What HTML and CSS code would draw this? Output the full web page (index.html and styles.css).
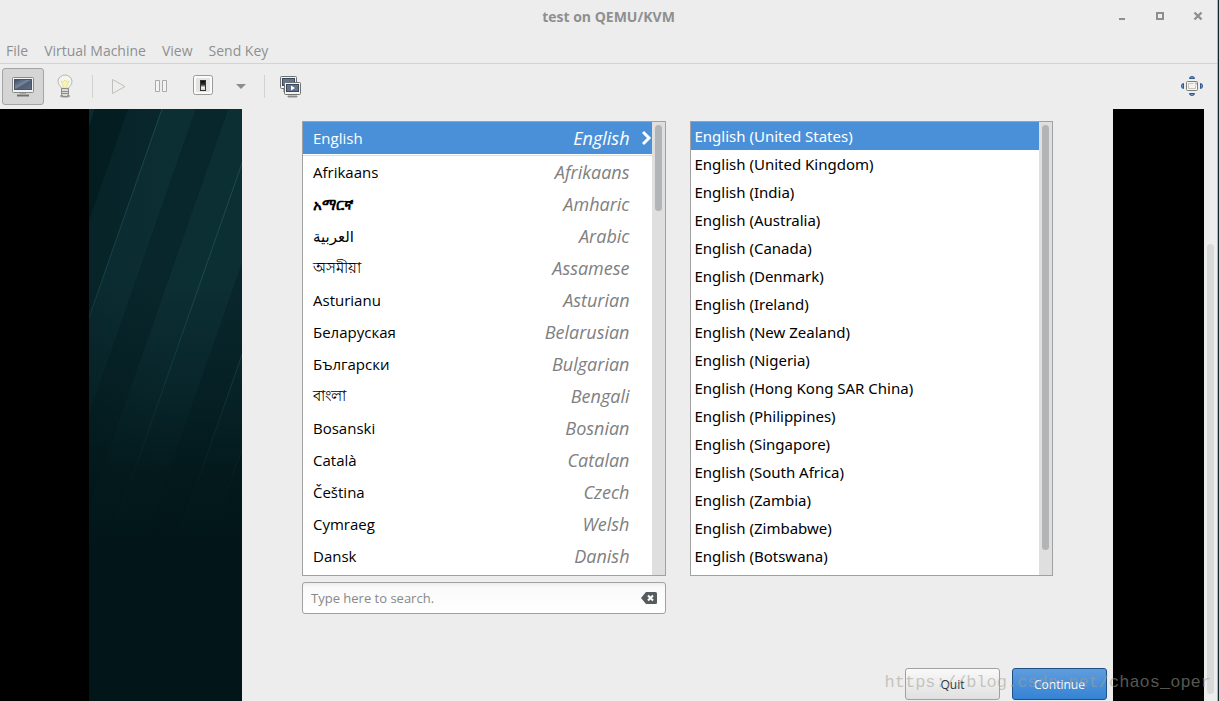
FILE: index.html
```
<!DOCTYPE html>
<html lang="en">
<head>
<meta charset="utf-8">
<title>test on QEMU/KVM</title>
<link rel="stylesheet" href="styles.css">
</head>
<body>
<div class="window">
  <header class="titlebar">
    <h1 class="title">test on QEMU/KVM</h1>
    <div class="controls">
      <button class="control" aria-label="Minimize"><svg width="10" height="10"><path d="M2 7h6v2H2z" fill="#8d9090"/></svg></button>
      <button class="control" aria-label="Maximize"><svg width="10" height="10"><path d="M2 2h6v6H2z" fill="none" stroke="#8d9090" stroke-width="2"/></svg></button>
      <button class="control" aria-label="Close"><svg width="10" height="10"><path d="M1.500 1.500l7 7M8.500 1.500l-7 7" fill="none" stroke="#8d9090" stroke-width="2.4"/></svg></button>
    </div>
  </header>
  <nav class="menubar">
    <button class="menu">File</button>
    <button class="menu">Virtual Machine</button>
    <button class="menu">View</button>
    <button class="menu">Send Key</button>
  </nav>
  <div class="toolbar">
    <button class="tool tool-active" aria-label="Console">
      <svg width="24" height="24"><defs><linearGradient id="scr" x1="0" y1="0" x2="1" y2="1"><stop offset="0" stop-color="#3a485c"/><stop offset=".45" stop-color="#77859a"/><stop offset=".55" stop-color="#4f5e74"/><stop offset="1" stop-color="#5e6d84"/></linearGradient></defs><path d="M6 20.500h12v2H6z" fill="#6f726e"/><path d="M9 18h6v3H9z" fill="#aaa"/><rect x="1.500" y="3.500" width="21" height="15" rx="1" fill="#f2f2f0" stroke="#888a85"/><rect x="3.500" y="5.500" width="17" height="10" fill="url(#scr)" stroke="#4a5466"/></svg>
    </button>
    <button class="tool" aria-label="Details">
      <svg width="24" height="24"><ellipse cx="12" cy="22" rx="5" ry="1.500" fill="#999"/><path d="M8.500 14.500C8 12 5 11 5 7.500a7 6.500 0 0 1 14 0c0 3.500-3 4.500-3.500 7z" fill="#f5f5ee" stroke="#b5b6b0"/><path d="M8 7l2 1 2-2 2 2 2-1-2 4v3h-4v-3z" fill="#f8f3b8" stroke="#e6de80" stroke-width=".8"/><path d="M8.500 14.500h7v6l-1.500 2h-4l-1.500-2z" fill="#d9dad6" stroke="#888a85"/><path d="M9 17.500h6M9 19.500h6" stroke="#8d8f8a"/></svg>
    </button>
    <span class="separator"></span>
    <button class="tool" aria-label="Run">
      <svg width="24" height="24"><path d="M5.500 5.500v14L18 12.500z" fill="#eeeeec" stroke="#bfc0bd"/></svg>
    </button>
    <button class="tool" aria-label="Pause">
      <svg width="24" height="24"><path d="M6.500 6.500h4v11h-4zM13.500 6.500h4v11h-4z" fill="#f3f3f1" stroke="#a9aaa7"/></svg>
    </button>
    <button class="tool" aria-label="Shut down">
      <svg width="24" height="24"><defs><linearGradient id="sw" x1="0" y1="0" x2="0" y2="1"><stop offset="0" stop-color="#000"/><stop offset=".4" stop-color="#333"/><stop offset=".7" stop-color="#eee"/><stop offset="1" stop-color="#ccc"/></linearGradient></defs><rect x="2.500" y="1.500" width="19" height="19" rx="2" fill="#fafafa" stroke="#9a9b98"/><rect x="5" y="4" width="14" height="14" rx="1" fill="#e3e3e1"/><rect x="9.500" y="6.500" width="5" height="10" fill="url(#sw)" stroke="#333"/></svg>
    </button>
    <button class="tool tool-narrow" aria-label="Shut down options">
      <svg width="12" height="24"><path d="M1 10h10l-5 5z" fill="#8b8e8d"/></svg>
    </button>
    <span class="separator"></span>
    <button class="tool" aria-label="Snapshots">
      <svg width="24" height="24"><path d="M4 15h5v3H4z" fill="#aaa"/><rect x="1.500" y="2.500" width="16" height="12" rx="1" fill="#f2f2f0" stroke="#6f726e"/><rect x="3.500" y="4.500" width="12" height="7" fill="#65748a" stroke="#3b475a"/><path d="M9 22h9v1H9z" fill="#6f726e" stroke="#8f918e"/><rect x="5.500" y="8.500" width="16" height="12" rx="1" fill="#f2f2f0" stroke="#6f726e"/><rect x="7.500" y="10.500" width="12" height="7" fill="#65748a" stroke="#3b475a"/><path d="M12 11.500v5l4-2.500z" fill="#fff"/></svg>
    </button>
    <button class="tool tool-end" aria-label="Fullscreen">
      <svg width="24" height="24"><g fill="#7ba0d2" stroke="#315791"><path d="M9.500 4.500Q9.500 2.500 12 2.500t2.500 2zM9.500 19.500q0 2 2.500 2t2.500-2zM3.500 9.500q-2 0-2 2.500t2 2.500zM20.500 9.500q2 0 2 2.500t-2 2.500z"/></g><rect x="6.500" y="7.500" width="11" height="9" rx="1" fill="#f4f4f1" stroke="#7c7e79"/><path d="M8.500 9.500h5M8.500 9.500v5h7v-3" fill="none" stroke="#c5c8bb"/><path d="M15 8.500h2v2h-2z" fill="#b9bbae"/></svg>
    </button>
  </div>
  <main class="viewport">
    <div class="bezel"></div>
    <svg class="wallpaper" viewBox="0 0 153 592" preserveAspectRatio="xMidYMin slice" aria-hidden="true">
      <defs>
        <linearGradient id="fade" x1="0" y1="0" x2="0" y2="1"><stop offset=".3" stop-color="#021619" stop-opacity="0"/><stop offset=".48" stop-color="#021619" stop-opacity=".4"/><stop offset=".62" stop-color="#021619" stop-opacity=".85"/><stop offset=".75" stop-color="#021619"/></linearGradient>
        <linearGradient id="corner" x1="0" y1="0" x2="1" y2="0"><stop offset="0" stop-color="#021619" stop-opacity=".2"/><stop offset=".5" stop-color="#021619" stop-opacity="0"/></linearGradient>
      </defs>
      <rect width="153" height="592" fill="#08272c"/>
      <g transform="matrix(1 0 -.35 1 0 0)">
        <path d="M0 0h6v592H0zM73 0h34v592H73zM139 0h68v592h-68z" fill="#0c2f34"/>
        <path d="M6 0h33v592H6z" fill="#041e22"/>
        <path d="M107 0h32v592h-32zM207 0h32v592h-32z" fill="#08272c"/>
        <path d="M239 0h33v592h-33z" fill="#0a2b30"/>
        <path d="M73 0v592M172 0v592M239 0v592M272 0v592" stroke="#1a4a4f"/>
      </g>
      <rect width="153" height="592" fill="url(#corner)"/>
      <rect width="153" height="592" fill="url(#fade)"/>
    </svg>
    <section class="installer">
      <div class="pickers">
        <div class="picker">
          <div class="listbox">
            <ul class="items languages">
              <li><button class="row row-selected"><span lang="en">English</span><em>English</em><svg class="chevron" width="10" height="16"><path d="M1 2l6 6-6 6" fill="none" stroke="#fff" stroke-width="3"/></svg></button></li>
              <li><button class="row"><span lang="af">Afrikaans</span><em>Afrikaans</em></button></li>
              <li><button class="row"><span lang="am" class="heavy">አማርኛ</span><em>Amharic</em></button></li>
              <li><button class="row"><span lang="ar">العربية</span><em>Arabic</em></button></li>
              <li><button class="row"><span lang="as">অসমীয়া</span><em>Assamese</em></button></li>
              <li><button class="row"><span lang="ast">Asturianu</span><em>Asturian</em></button></li>
              <li><button class="row"><span lang="be">Беларуская</span><em>Belarusian</em></button></li>
              <li><button class="row"><span lang="bg">Български</span><em>Bulgarian</em></button></li>
              <li><button class="row"><span lang="bn">বাংলা</span><em>Bengali</em></button></li>
              <li><button class="row"><span lang="bs">Bosanski</span><em>Bosnian</em></button></li>
              <li><button class="row"><span lang="ca">Català</span><em>Catalan</em></button></li>
              <li><button class="row"><span lang="cs">Čeština</span><em>Czech</em></button></li>
              <li><button class="row"><span lang="cy">Cymraeg</span><em>Welsh</em></button></li>
              <li><button class="row"><span lang="da">Dansk</span><em>Danish</em></button></li>
            </ul>
            <div class="track"><div class="thumb thumb-short"></div></div>
          </div>
          <div class="search">
            <input class="search-input" type="text" placeholder="Type here to search." aria-label="Search languages">
            <button class="clear" aria-label="Clear"><svg width="16" height="12"><path d="M0 6l5-6h9.500q1.500 0 1.500 1.500v9q0 1.500-1.500 1.500H5z" fill="#555c5e"/><path d="M7 3.500l5 5M12 3.500l-5 5" stroke="#fff" stroke-width="2"/></svg></button>
          </div>
        </div>
        <div class="picker">
          <div class="listbox">
            <ul class="items locales">
              <li><button class="row row-selected">English (United States)</button></li>
              <li><button class="row">English (United Kingdom)</button></li>
              <li><button class="row">English (India)</button></li>
              <li><button class="row">English (Australia)</button></li>
              <li><button class="row">English (Canada)</button></li>
              <li><button class="row">English (Denmark)</button></li>
              <li><button class="row">English (Ireland)</button></li>
              <li><button class="row">English (New Zealand)</button></li>
              <li><button class="row">English (Nigeria)</button></li>
              <li><button class="row">English (Hong Kong SAR China)</button></li>
              <li><button class="row">English (Philippines)</button></li>
              <li><button class="row">English (Singapore)</button></li>
              <li><button class="row">English (South Africa)</button></li>
              <li><button class="row">English (Zambia)</button></li>
              <li><button class="row">English (Zimbabwe)</button></li>
              <li><button class="row">English (Botswana)</button></li>
            </ul>
            <div class="track"><div class="thumb thumb-long"></div></div>
          </div>
        </div>
      </div>
      <div class="actions">
        <button class="action">Quit</button>
        <button class="action action-primary">Continue</button>
      </div>
    </section>
    <div class="bezel"></div>
    <div class="page-track"><div class="page-thumb"></div></div>
  </main>
</div>
<div class="watermark">https://blog.csdn.net/chaos_oper</div>
</body>
</html>
```
FILE: styles.css
```
* { box-sizing: border-box; }

body {
  margin: 0;
  background: #08272e;
  font-family: "Open Sans", "Noto Sans", "DejaVu Sans", sans-serif;
  font-size: 14px;
  color: #000;
  position: relative;
}

button {
  margin: 0;
  padding: 0;
  border: 0;
  background: none;
  font: inherit;
  color: inherit;
}

svg { display: block; }

.window {
  display: flex;
  flex-direction: column;
  min-height: 100vh;
  margin-right: 1px;
  border-right: 1px solid #b4b6b6;
  background: #ededed;
}

.titlebar {
  display: grid;
  grid-template-columns: 114px 1fr 114px;
  align-items: center;
  height: 32px;
}

.title {
  grid-column: 2;
  margin: 0;
  text-align: center;
  font-size: 14px;
  font-weight: 700;
  color: #8d9090;
}

.controls { display: flex; }

.control {
  flex: 1;
  display: flex;
  justify-content: center;
}

.menubar {
  display: flex;
  gap: 16px;
  padding: 5px 6px 0;
  height: 32px;
  border-bottom: 1px solid #d4d4d4;
  color: #8d9090;
}

.toolbar {
  display: flex;
  align-items: center;
  height: 45px;
  padding: 0 4px 0 2px;
}

.tool {
  display: flex;
  align-items: center;
  justify-content: center;
  width: 42px;
  height: 37px;
  padding-bottom: 2px;
  border: 1px solid transparent;
  border-radius: 3px;
}

.tool-active {
  background: #d5d5d5;
  border-color: #a5a5a5;
}

.tool-narrow { width: 34px; }

.tool-end { margin-left: auto; }

.separator {
  width: 1px;
  height: 23px;
  margin: 0 5px 0 6px;
  background: #d2d2d2;
}

.viewport {
  flex: 1;
  display: grid;
  grid-template-columns: 89px 153px 1fr 91px 13px;
}

.bezel { background: #000; }

.wallpaper {
  width: 100%;
  height: 100%;
  background: #021619;
}

.installer {
  display: flex;
  flex-direction: column;
  justify-content: space-between;
  padding-top: 12px;
}

.pickers {
  display: grid;
  grid-template-columns: 1fr 1fr;
  gap: 24px;
  padding: 0 60px;
}

.listbox {
  display: flex;
  height: 455px;
  border: 1px solid #a1a1a1;
  background: #fff;
}

.items {
  flex: 1;
  margin: 0;
  padding: 0;
  list-style: none;
  font-size: 15px;
}

.row {
  display: flex;
  align-items: center;
  width: 100%;
}

.row-selected {
  background: #4a90d9;
  color: #fff;
}

.languages .row {
  position: relative;
  height: 32px;
  padding: 0 22px 0 10px;
  justify-content: space-between;
}

.languages li:first-child {
  padding-bottom: 1px;
  border-bottom: 1px solid #ddd;
}

.languages em {
  font-size: 18px;
  color: #808080;
}

.languages .row-selected em { color: #fff; }

.heavy { font-weight: 700; }

.chevron {
  position: absolute;
  top: 8px;
  right: 0;
}

.locales { font-family: "Noto Sans", "Open Sans", sans-serif; }

.locales .row {
  height: 28px;
  padding: 0 4px;
}

.track {
  width: 13px;
  padding: 3px;
  background: #dfdfdf;
}

.thumb {
  border-radius: 4px;
  background: #b3b4b5;
}

.thumb-short { height: 86px; }

.thumb-long { height: 425px; }

.search {
  display: flex;
  align-items: center;
  height: 32px;
  margin-top: 6px;
  padding: 0 8px;
  border: 1px solid #a1a1a1;
  border-radius: 3px;
  background: linear-gradient(#ededed, #fafafa 5px, #fff);
}

.search-input {
  flex: 1;
  min-width: 0;
  padding: 0;
  border: 0;
  outline: 0;
  background: none;
  font: inherit;
  font-size: 13px;
}

.search-input::placeholder { color: #888; }

.actions {
  display: flex;
  justify-content: flex-end;
  gap: 12px;
  padding: 0 6px 1px;
}

.action {
  width: 95px;
  height: 32px;
  border: 1px solid #a1a1a1;
  border-radius: 3px;
  background: linear-gradient(#f9f9f9, #e0e0e0);
  font-size: 12px;
  color: #2e3436;
}

.action-primary {
  border-color: #1c5187;
  background: linear-gradient(#5f9ddd, #3583d5);
  color: #fff;
}

.page-track {
  display: flex;
  flex-direction: column;
  padding: 135px 3px 7px;
}

.page-thumb {
  flex: 1;
  border-radius: 4px;
  background: #d8dada;
}

.watermark {
  position: absolute;
  right: 8px;
  bottom: 8px;
  font-family: "Liberation Mono", monospace;
  font-size: 17px;
  line-height: 20px;
  color: rgba(160, 160, 150, 0.55);
  pointer-events: none;
}
```
